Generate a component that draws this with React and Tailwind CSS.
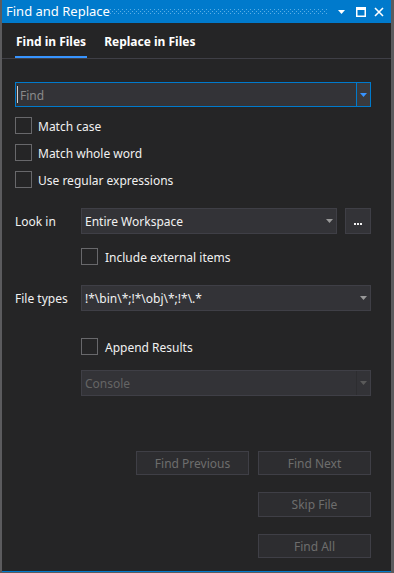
import React from "react";

function Caret({ color = "#999999" }) {
  return (
    <svg width="7" height="4" viewBox="0 0 7 4">
      <path d="M0 0h7L3.5 4z" fill={color} />
    </svg>
  );
}

function CheckBox({ label, gap = "ml-[6px]" }) {
  return (
    <div className="flex items-center h-[17px]">
      <span className="w-[17px] h-[17px] border border-[#68686b] bg-[#252526]" />
      <span className={`${gap} pt-[2px] text-[12px] leading-[17px] text-[#f1f1f1] whitespace-nowrap`}>{label}</span>
    </div>
  );
}

function Combo({ value, disabled, className = "" }) {
  return (
    <div
      className={`flex h-[26px] border border-[#3f3f46] bg-[#333337] ${className}`}
    >
      <span
        className={`flex-1 pl-[3px] pt-[1px] text-[12px] leading-[24px] whitespace-nowrap ${
          disabled ? "text-[#656565]" : "text-[#f1f1f1]"
        }`}
      >
        {value}
      </span>
      <span
        className={`w-[14px] flex items-center justify-center ${
          disabled ? "border-l border-[#2d2d30]" : ""
        }`}
      >
        <Caret color={disabled ? "#5a5a5a" : "#999999"} />
      </span>
    </div>
  );
}

function Btn({ children, className = "" }) {
  return (
    <div
      className={`w-[113px] flex items-center justify-center pt-[1px] border border-[#3f3f46] bg-[#2d2d30] text-[12px] text-[#6d6d6d] ${className}`}
    >
      {children}
    </div>
  );
}

export default function App() {
  return (
    <div className="w-[394px] h-[573px] flex flex-col bg-[#252526] border-l-2 border-r-[3px] border-[#5b5b5e] font-['Noto_Sans',sans-serif]">
      {/* title bar */}
      <div className="h-[23px] flex items-center bg-[#007acc] pl-[4px] text-white">
        <span className="w-[104px] text-[13px] leading-[23px] whitespace-nowrap">Find and Replace</span>
        <svg width="217" height="6" viewBox="0 0 217 6">
          <defs>
            <pattern id="dots" width="4" height="4" patternUnits="userSpaceOnUse">
              <rect x="0" y="0" width="1" height="1" fill="#5aaee6" />
              <rect x="2" y="2" width="1" height="1" fill="#5aaee6" />
            </pattern>
          </defs>
          <rect width="217" height="6" fill="url(#dots)" />
        </svg>
        <svg className="ml-[11px]" width="7" height="4" viewBox="0 0 7 4">
          <path d="M0 0h7L3.5 4z" fill="#fff" />
        </svg>
        <svg className="ml-[11px]" width="10" height="10" viewBox="0 0 10 10">
          <rect x="0.75" y="0.75" width="8.5" height="8.5" fill="none" stroke="#fff" strokeWidth="1.5" />
          <rect x="0" y="0" width="10" height="3" fill="#fff" />
        </svg>
        <svg className="ml-[8px]" width="10" height="10" viewBox="0 0 10 10">
          <path d="M1 1l8 8M9 1l-8 8" stroke="#fff" strokeWidth="1.6" />
        </svg>
      </div>

      {/* tabs */}
      <div className="flex pl-[13px] pt-[10px] gap-[16px]">
        <div className="px-[1px] pb-[5px] border-b-2 border-[#3794ff] text-[12px] leading-[18px] font-bold text-white whitespace-nowrap">
          Find in Files
        </div>
        <div className="px-[1px] pb-[5px] border-b-2 border-transparent text-[12px] leading-[18px] font-bold text-white whitespace-nowrap">
          Replace in Files
        </div>
      </div>
      <div className="h-px bg-[#3f3f46]" />

      <div className="flex flex-col pl-[13px] w-[369px]">
        {/* find input */}
        <div className="mt-[23px] flex h-[25px] border border-[#007acc] bg-[#333337]">
          <span className="w-px h-[17px] mt-[3px] ml-[1px] bg-[#d0d0d0]" />
          <span className="flex-1 pl-[2px] pt-[1px] text-[12px] leading-[23px] text-[#8a8a8a]">Find</span>
          <span className="w-[14px] flex items-center justify-center border-l border-[#007acc] bg-[#3a3a3d]">
            <Caret color="#3794ff" />
          </span>
        </div>

        <div className="mt-[10px] flex flex-col gap-[10px]">
          <CheckBox label="Match case" />
          <CheckBox label="Match whole word" />
          <CheckBox label="Use regular expressions" />
        </div>

        {/* look in */}
        <div className="mt-[20px] flex items-center">
          <span className="w-[66px] pt-[1px] text-[12px] text-[#f1f1f1]">Look in</span>
          <Combo value="Entire Workspace" className="w-[256px]" />
          <div className="ml-[8px] w-[26px] h-[26px] flex items-end justify-center pb-[8px] gap-[1px] border border-[#3f3f46] bg-[#333337]">
            <span className="w-[2px] h-[2px] bg-[#f1f1f1]" />
            <span className="w-[2px] h-[2px] bg-[#f1f1f1]" />
            <span className="w-[2px] h-[2px] bg-[#f1f1f1]" />
          </div>
        </div>

        <div className="mt-[14px] pl-[66px]">
          <CheckBox label="Include external items" gap="ml-[7px]" />
        </div>

        {/* file types */}
        <div className="mt-[20px] flex items-center">
          <span className="w-[66px] pt-[1px] text-[12px] text-[#f1f1f1] whitespace-nowrap">File types</span>
          <Combo value="!*\bin\*;!*\obj\*;!*\.*" className="flex-1" />
        </div>

        <div className="mt-[27px] pl-[66px]">
          <CheckBox label="Append Results" gap="ml-[7px]" />
        </div>

        <div className="mt-[15px] pl-[66px]">
          <Combo value="Console" disabled />
        </div>

        {/* buttons */}
        <div className="mt-[55px] flex justify-end gap-[9px]">
          <Btn className="h-[24px]">Find Previous</Btn>
          <Btn className="h-[24px]">Find Next</Btn>
        </div>
        <div className="mt-[17px] flex justify-end">
          <Btn className="h-[25px]">Skip File</Btn>
        </div>
        <div className="mt-[17px] flex justify-end">
          <Btn className="h-[24px]">Find All</Btn>
        </div>
      </div>

      <div className="flex-1" />
      <div className="h-px bg-[#007acc]" />
      <div className="h-px bg-[#5b5b5e]" />
    </div>
  );
}
